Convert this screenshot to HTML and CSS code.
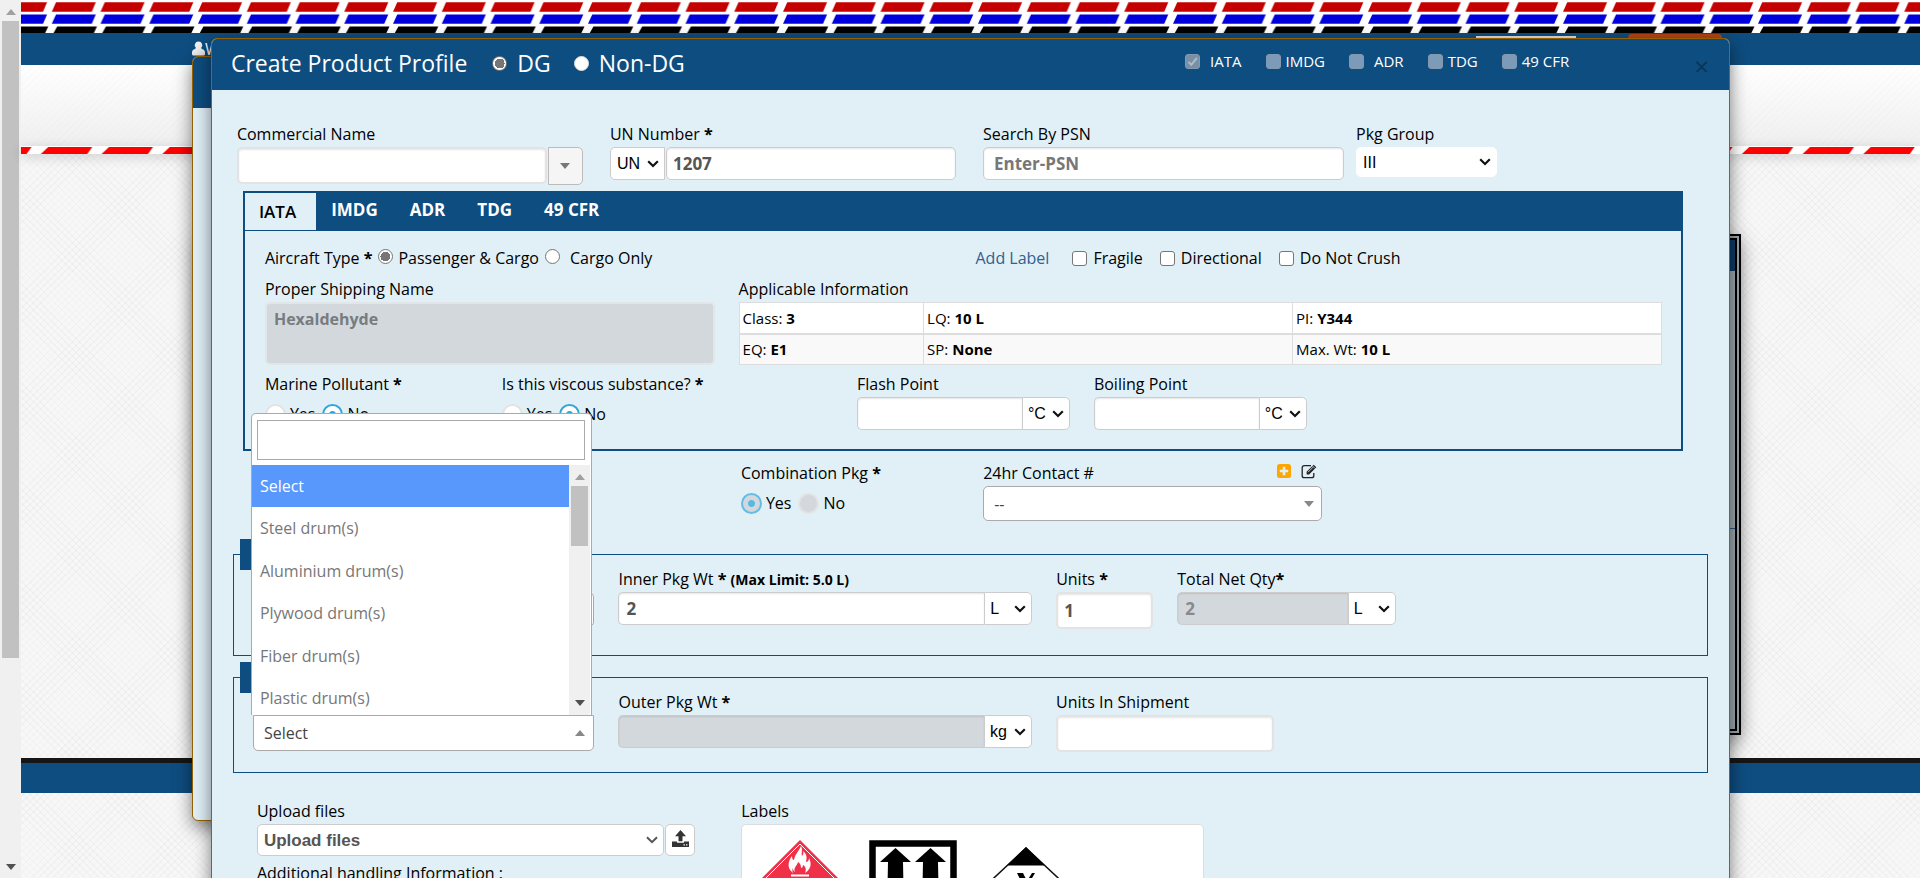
FILE: index.html
```html
<!DOCTYPE html>
<html lang="en">
<head>
<meta charset="utf-8">
<title>Create Product Profile</title>
<link rel="stylesheet" href="styles.css">
</head>
<body>
<div class="rail" aria-hidden="true">
  <span class="tri up"></span>
  <span class="thumb"></span>
  <span class="tri down dark"></span>
</div>
<div class="page">
  <header>
    <svg class="stripes" aria-hidden="true">
      <defs>
        <pattern id="air" x="30.8" y="0" width="48.75" height="33" patternUnits="userSpaceOnUse">
          <path d="M4.2 2.2H44L40 11.8H0z" fill="#c40000"/>
          <path d="M4.2 14.4H44L40 23.8H0z" fill="#0000dc"/>
          <path d="M5.4 26.6H45.2L42 33.2H1.6z" fill="#000"/>
        </pattern>
      </defs>
      <rect width="100%" height="33" fill="url(#air)"/>
    </svg>
    <div class="navbar">
      <svg class="user" viewBox="0 0 13 14" aria-hidden="true"><path d="M6.5 0a3.8 3.8 0 0 1 2.6 6.6L10 7.500Q13 8 13 11v1.500Q13 14 11.500 14h-10Q0 14 0 12.500V11Q0 8 3 7.500l.9-.9A3.800 3.800 0 0 1 6.500 0z" fill="#f2f2f2"/></svg><span class="welcome">W</span>
      <span class="tab-white"></span><span class="tab-orange"></span>
    </div>
    <div class="banner"></div>
    <svg class="redline" aria-hidden="true">
      <defs>
        <pattern id="red" x="19.8" y="0" width="60.75" height="8" patternUnits="userSpaceOnUse">
          <path d="M7.500 1H51.500L46.500 8H0z" fill="#f00"/>
        </pattern>
      </defs>
      <rect width="100%" height="8" fill="url(#red)"/>
    </svg>
  </header>
  <main class="content"><div class="back-panel"><div class="back-bar"></div><div class="back-line"></div></div></main>
  <footer class="footer"></footer>
  <div class="rest"></div>

  <div class="modal modal-back"><div class="modal-head"></div></div>

  <form class="modal modal-main">
    <div class="modal-head">
      <h1 class="title">Create Product Profile</h1>
      <label class="kind"><input type="radio" class="radio" name="kind" checked>DG</label>
      <label class="kind"><input type="radio" class="radio solid" name="kind">Non-DG</label>
      <div class="regs">
        <label class="reg g10"><input type="checkbox" class="check dim" checked disabled>IATA</label>
        <label class="reg"><input type="checkbox" class="check dim" disabled>IMDG</label>
        <label class="reg g10"><input type="checkbox" class="check dim" disabled>ADR</label>
        <label class="reg"><input type="checkbox" class="check dim" disabled>TDG</label>
        <label class="reg"><input type="checkbox" class="check dim" disabled>49 CFR</label>
      </div>
      <button type="button" class="close" aria-label="Close">×</button>
    </div>

    <div class="modal-body">
      <div class="top-row">
        <div>
          <label class="lab" for="cname">Commercial Name</label>
          <div class="group combo"><input id="cname" class="inp soft" type="text"><button type="button" class="combo-btn" aria-label="Show names"><span class="tri down"></span></button></div>
        </div>
        <div>
          <label class="lab" for="unno">UN Number <b>*</b></label>
          <div class="group un"><select class="sel unsel" aria-label="Prefix"><option>UN</option></select><input id="unno" class="inp tight" type="text" value="1207"></div>
        </div>
        <div>
          <label class="lab" for="psn">Search By PSN</label>
          <div class="group"><input id="psn" class="inp" type="text" placeholder="Enter-PSN"></div>
        </div>
        <div>
          <label class="lab" for="pg">Pkg Group</label>
          <select id="pg" class="sel pgsel"><option>III</option></select>
        </div>
      </div>

      <section class="panel">
        <nav class="tabs">
          <a class="tab active" href="#iata">IATA</a>
          <a class="tab" href="#imdg">IMDG</a>
          <a class="tab" href="#adr">ADR</a>
          <a class="tab" href="#tdg">TDG</a>
          <a class="tab" href="#cfr">49 CFR</a>
        </nav>
        <div class="panel-body" id="iata">
          <div class="span6 line">
            <span>Aircraft Type <b>*</b></span>
            <label class="air"><input type="radio" class="radio" name="air" checked>Passenger &amp; Cargo</label>
            <label class="air last"><input type="radio" class="radio" name="air">Cargo Only</label>
          </div>
          <div class="span6 line marks">
            <a class="addlabel" href="#labels">Add Label</a>
            <label class="mark"><input type="checkbox" class="check">Fragile</label>
            <label class="mark"><input type="checkbox" class="check">Directional</label>
            <label class="mark"><input type="checkbox" class="check">Do Not Crush</label>
          </div>
          <div class="span4">
            <label class="lab" for="ship">Proper Shipping Name</label>
            <textarea id="ship" class="ship" disabled>Hexaldehyde</textarea>
          </div>
          <div class="span8">
            <div class="lab">Applicable Information</div>
            <table class="info">
              <colgroup><col class="c1"><col class="c2"><col class="c3"></colgroup>
              <tr><td>Class: <b>3</b></td><td>LQ: <b>10 L</b></td><td>PI: <b>Y344</b></td></tr>
              <tr><td>EQ: <b>E1</b></td><td>SP: <b>None</b></td><td>Max. Wt: <b>10 L</b></td></tr>
            </table>
          </div>
          <div class="span2">
            <div class="lab">Marine Pollutant <b>*</b></div>
            <div class="yn"><label><input type="radio" class="ring" name="mp">Yes</label><label><input type="radio" class="ring" name="mp" checked>No</label></div>
          </div>
          <div class="span2">
            <div class="lab">Is this viscous substance? <b>*</b></div>
            <div class="yn"><label><input type="radio" class="ring" name="vs">Yes</label><label><input type="radio" class="ring" name="vs" checked>No</label></div>
          </div>
          <div class="span2 flash">
            <label class="lab" for="fp">Flash Point</label>
            <div class="group"><input id="fp" class="inp joined" type="text"><select class="sel unit" aria-label="Flash unit"><option>°C</option></select></div>
          </div>
          <div class="span2">
            <label class="lab" for="bp">Boiling Point</label>
            <div class="group"><input id="bp" class="inp joined" type="text"><select class="sel unit" aria-label="Boiling unit"><option>°C</option></select></div>
          </div>
        </div>
      </section>

      <div class="mid-row">
        <div class="comb">
          <div class="lab">Combination Pkg <b>*</b></div>
          <div class="yn"><label><input type="radio" class="ring off" name="cp" checked disabled>Yes</label><label><input type="radio" class="ring off" name="cp" disabled>No</label></div>
        </div>
        <div class="contact">
          <div class="lab contact-head"><label for="ct">24hr Contact #</label>
            <span class="tools">
              <button type="button" class="tool" aria-label="Add"><svg width="14" height="14" viewBox="0 0 14 14"><rect width="14" height="14" rx="2.500" fill="#ffa500"/><path d="M5.700 2.800h2.600v2.900h2.900v2.600H8.300v2.900H5.700V8.300H2.800V5.700h2.900z" fill="#e1f0f7"/></svg></button>
              <button type="button" class="tool" aria-label="Edit"><svg width="16" height="15" viewBox="0 0 16 15"><path d="M10 1.700H3.200a2 2 0 0 0-2 2v8a2 2 0 0 0 2 2h7.600a2 2 0 0 0 2-2V9" fill="none" stroke="#222" stroke-width="1.300"/><path d="M5.600 7.800 12.700.8l2.600 2.500-7.200 7.100H5.600z" fill="#222"/><path d="M7 8.200 12 3.200" stroke="#e1f0f7" stroke-width=".8"/><path d="m11.600 2 2.500 2.500" stroke="#e1f0f7" stroke-width=".7"/></svg></button>
            </span>
          </div>
          <select id="ct" class="sel big"><option>--</option></select>
        </div>
      </div>

      <section class="box">
        <div class="box-tag"></div>
        <div class="inner-grid">
          <div><label class="lab" for="ip">&nbsp;</label><select id="ip" class="sel big"><option></option></select></div>
          <div>
            <label class="lab" for="iw">Inner Pkg Wt <b>*</b> <b class="small">(Max Limit: 5.0 L)</b></label>
            <div class="group"><input id="iw" class="inp joined pad8" type="text" value="2"><select class="sel unit" aria-label="Inner unit"><option>L</option></select></div>
          </div>
          <div><label class="lab" for="iu">Units <b>*</b></label><input id="iu" class="inp soft tight" type="text" value="1"></div>
          <div>
            <label class="lab" for="tq">Total Net Qty<b>*</b></label>
            <div class="group"><input id="tq" class="inp joined pad8" type="text" value="2" disabled><select class="sel unit" aria-label="Total unit"><option>L</option></select></div>
          </div>
        </div>
      </section>

      <section class="box outer">
        <div class="box-tag"></div>
        <div class="outer-grid">
          <div>
            <div class="lab">&nbsp;</div>
            <div class="picker">
              <button type="button" class="picked">Select<span class="tri up"></span></button>
              <div class="drop">
                <input class="search" type="text" aria-label="Search packages">
                <div class="list">
                  <ul class="opts">
                    <li class="opt on">Select</li>
                    <li class="opt">Steel drum(s)</li>
                    <li class="opt">Aluminium drum(s)</li>
                    <li class="opt">Plywood drum(s)</li>
                    <li class="opt">Fiber drum(s)</li>
                    <li class="opt">Plastic drum(s)</li>
                  </ul>
                  <div class="track"><span class="tri up"></span><span class="grip"></span><span class="tri down dark"></span></div>
                </div>
              </div>
            </div>
          </div>
          <div>
            <label class="lab" for="ow">Outer Pkg Wt <b>*</b></label>
            <div class="group"><input id="ow" class="inp joined" type="text" disabled><select class="sel unit" aria-label="Outer unit"><option>kg</option></select></div>
          </div>
          <div><label class="lab" for="us">Units In Shipment</label><input id="us" class="inp soft" type="text"></div>
        </div>
      </section>

      <div class="bottom-row">
        <div class="uploads">
          <label class="lab" for="upl">Upload files</label>
          <div class="group upload-group"><select id="upl" class="sel upsel"><option>Upload files</option></select><button type="button" class="upbtn" aria-label="Upload"><svg width="17" height="17" viewBox="0 0 17 17"><path d="M8.500 0 14 6.200h-3.500v5h-4v-5H3z" fill="#333"/><path d="M0 11.500h5v1.200h7v-1.200h5V17H0z" fill="#333"/><path d="M11.500 14.800h1.400M14 14.800h1.400" stroke="#fff" stroke-width="1.200"/></svg></button></div>
          <label class="lab add" for="ah">Additional handling Information :</label>
          <textarea id="ah" class="note"></textarea>
        </div>
        <div class="labels" id="labels">
          <div class="lab">Labels</div>
          <div class="label-box">
            <svg width="92" height="92" viewBox="0 0 92 92"><path d="M46 0 92 46 46 92 0 46z" fill="#ee3148"/><path d="M46 4 88 46 46 88 4 46z" fill="none" stroke="#fff" stroke-width="1"/><path d="M38 32C33 28 34 21 38 16c0 3 1 4 2 4 1-6 5-9 7-14 2 4 0 7 1 10 1-1 2-3 1-5 4 3 4 7 3 11 2 0 3-2 3-4 3 6 2 11-4 15 2-4 0-7-2-8 0 2-1 3-2 3 0-3-1-5-3-6-1 4-5 6-3 10-2-1-2-3-2-4-1 2-1 4 1 7z" fill="#fff"/><path d="M37 35.500h18" stroke="#fff" stroke-width="2"/></svg>
            <svg width="88" height="92" viewBox="0 0 88 92"><rect x="3.500" y="3.500" width="81" height="100" fill="#fff" stroke="#000" stroke-width="6.500"/><path d="M26.500 8 42 22h-8l1 50H18l1-50h-8zM61.500 8 77 22h-8l1 50H53l1-50h-8z"/></svg>
            <svg class="lq" width="92" height="84" viewBox="0 0 92 84"><path d="M46 1 91 43 46 85 1 43z" fill="#fff" stroke="#111" stroke-width="1.500"/><path d="M46 0 65 18.500H27z"/><path d="M37 26h6l4 8 5-8h3l-7 12v12h-5V38z"/></svg>
          </div>
        </div>
      </div>
    </div>
  </form>
</div>
</body>
</html>
```
FILE: styles.css
```css
* { box-sizing: border-box; }
html, body { height: 100%; }
body {
  margin: 0;
  display: flex;
  overflow: hidden;
  font: 16px/25px "Open Sans", "Noto Sans", sans-serif;
  color: #000;
}
input, select, button, textarea { margin: 0; font: inherit; }
a { text-decoration: none; }

/* scroll tracks */
.rail {
  width: 21px;
  flex: none;
  display: flex;
  flex-direction: column;
  align-items: center;
  padding: 9px 0 8px;
  background: #f0f0f0;
}
.thumb { width: 17px; flex: 0 0 74%; margin-top: 6px; background: #c1c1c1; }
.rail .dark { margin-top: auto; }
.tri { width: 0; height: 0; border: 5px solid transparent; flex: none; }
.tri.up { border-top: 0; border-bottom-color: #a0a0a0; border-bottom-width: 6px; }
.tri.down { border-bottom: 0; border-top-color: #777; border-top-width: 6px; }
.tri.dark { border-top-color: #505050; }

/* page behind the dialogs */
.page {
  position: relative;
  flex: 1;
  min-width: 0;
  display: flex;
  flex-direction: column;
  background-color: #f7f7f7;
  background-image:
    repeating-linear-gradient(45deg, rgba(0,0,0,.025) 0 1px, transparent 1px 5px),
    repeating-linear-gradient(-45deg, rgba(0,0,0,.025) 0 1px, transparent 1px 5px);
}
.stripes { display: block; width: 100%; height: 33px; background: #fff; }
.navbar { height: 32px; padding: 8px 0 0 171px; background: #0e4d80; color: #fff; display: flex; }
.user { width: 13px; height: 15px; flex: none; }
.welcome { font-size: 16px; line-height: 16px; }
.tab-white, .tab-orange { position: absolute; top: 36px; left: 76.600%; width: 100px; height: 20px; background: #e8e0d8; }
.tab-orange { top: 34px; left: 84.600%; width: 94px; border-radius: 4px; background: #b84317; }
.banner {
  height: 81px;
  background:
    repeating-linear-gradient(-45deg, rgba(0,0,0,.012) 0 1px, transparent 1px 5px),
    linear-gradient(#fff, #efefef);
}
.redline { display: block; width: 100%; height: 8px; background: #fff; box-shadow: 0 3px 12px rgba(0,0,0,.18); }
.content { flex: 1; padding: 80px 179px 23px; display: flex; }
.back-panel {
  flex: 1;
  border: 6px double #000;
  background: #9ba7ae;
  box-shadow: 0 6px 18px rgba(0,0,0,.4);
}
.back-bar { height: 31px; background: #0b3c64; }
.back-line { height: 258px; border-bottom: 1px solid #2a5a80; }
.footer { height: 35px; border-top: 5px solid #161616; background: #0e4d80; }
.rest { height: 85px; }

/* dialogs */
.modal {
  position: absolute;
  width: 80%;
  border: 1px solid #966000;
  border-radius: 6px;
  background: #e1f0f7;
  box-shadow: 0 6px 18px rgba(0,0,0,.5);
}
.modal-back { top: 56px; left: 9%; bottom: 57px; }
.modal-main { top: 38px; left: 10%; min-height: 900px; }
.modal-head {
  display: flex;
  align-items: center;
  height: 51px;
  padding: 0 20px 2px 19px;
  border-radius: 5px 5px 0 0;
  background: #0e4d80;
  color: #fff;
}
.title { margin: 0 25px 0 0; font-size: 23px; font-weight: 400; }
.kind { display: flex; align-items: center; gap: 10px; margin-right: 23px; font-size: 23px; }
.regs { display: flex; gap: 24px; margin: -4px 0 0 auto; font-size: 15px; }
.reg { display: flex; align-items: center; gap: 5px; }
.reg.g10 { gap: 10px; }
.close { margin: 4px 0 0 125px; padding: 0; border: 0; background: none; color: #0a3457; font-size: 26px; line-height: 20px; }
.modal-body { padding-top: 32px; }

/* controls */
.lab { display: block; line-height: 25px; white-space: nowrap; }
.small { font-size: 14px; }
.group { display: flex; }
.inp {
  width: 100%;
  min-width: 0;
  height: 33px;
  padding: 0 10px;
  border: 1px solid #ccc;
  border-radius: 5px;
  background: #fff;
  box-shadow: inset 0 1px 2px rgba(0,0,0,.1);
  color: #555;
  font-size: 17px;
  font-weight: 700;
}
.inp::placeholder { color: #777; opacity: 1; }
.inp.tight { padding: 0 6px; }
.inp.pad8 { padding: 0 7px; }
.inp.soft { height: 37px; border: 2px solid #e3e3e3; }
.inp.joined { flex: 1; width: auto; border-right: 0; border-radius: 5px 0 0 5px; }
.inp:disabled { background: #d3d8dc; color: #858a8e; }
.sel {
  appearance: none;
  height: 33px;
  padding: 0 4px 0 6px;
  border: 1px solid #ccc;
  border-radius: 5px;
  background: #fff url("data:image/svg+xml,%3Csvg xmlns='http://www.w3.org/2000/svg' width='12' height='8'%3E%3Cpath d='M1.200 1.200 6 6l4.800-4.800' fill='none' stroke='%23111' stroke-width='2.200'/%3E%3C/svg%3E") no-repeat right 5px center;
  color: #000;
  font: 16px "Liberation Sans", Arial, sans-serif;
}
.sel.unit { flex: 0 0 48px; border-radius: 0 5px 5px 0; padding-left: 5px; }
.unsel { flex: 0 0 55px; border-radius: 5px 0 0 5px; }
.pgsel { width: 141px; height: 30px; border-color: #fff; }
.sel.big {
  width: 100%;
  height: 35px;
  padding-left: 10px;
  border-color: #aaa;
  background-image: url("data:image/svg+xml,%3Csvg xmlns='http://www.w3.org/2000/svg' width='10' height='6'%3E%3Cpath d='M0 0h10L5 6z' fill='%23888'/%3E%3C/svg%3E");
  background-position: right 7px center;
  font: 16px "Open Sans", "Noto Sans", sans-serif;
  color: #444;
}
.radio, .check, .ring { appearance: none; flex: none; background: #fff; }
.radio { width: 15px; height: 15px; border: 1px solid #767676; border-radius: 50%; }
.radio:checked { background: radial-gradient(circle, #767676 0 5px, #fff 5px); }
.radio.solid { border-color: #ddd; }
.check { width: 15px; height: 15px; border: 1px solid #767676; border-radius: 3px; }
.check.dim { border-color: #8299ae; background-color: #7c9bb8; }
.check.dim:checked { background: #788fa5 url("data:image/svg+xml,%3Csvg xmlns='http://www.w3.org/2000/svg' width='13' height='13'%3E%3Cpath d='M2.500 7 5.300 9.800 10.800 3' fill='none' stroke='%23a9bccb' stroke-width='2'/%3E%3C/svg%3E"); }
.ring { width: 21px; height: 21px; border: 2px solid #e3e3e3; border-radius: 50%; }
.ring:checked { border-color: #34a5da; background: radial-gradient(circle, #34a5da 0 3px, #fff 4px); }
.ring.off { background: #d3d8dc; }
.ring.off:checked { border-color: #66bbe3; background: radial-gradient(circle, #5bb8e4 0 3px, #d3d8dc 4px); }
.yn { display: flex; gap: 7px; padding-top: 5px; }
.yn label { display: flex; align-items: center; gap: 4px; height: 25px; }

/* first row */
.top-row { display: grid; grid-template-columns: repeat(4, 1fr); column-gap: 12px; padding: 0 12px 0 25px; }
.combo { margin-right: 15px; gap: 1px; }
.combo-btn {
  flex: 0 0 35px;
  height: 38px;
  padding: 0;
  display: flex;
  align-items: center;
  justify-content: center;
  border: 1px solid #bbb;
  border-radius: 0 5px 5px 0;
  background: #f5f5f5;
}
.un { margin-right: 15px; gap: 1px; }

/* tabbed panel */
.panel { margin: 6px 46px 0 31px; border: 2px solid #0e4d80; }
.tabs { display: flex; height: 38px; border-bottom: 1px solid #0e4d80; background: #0e4d80; }
.tab { padding: 4px 17px 0 15px; color: #fff; font-size: 17px; font-weight: 700; }
.tab.active { padding: 6px 20px 0 14px; background: #e1f0f7; color: #000; font-weight: 600; }
.panel-body {
  display: grid;
  grid-template-columns: repeat(12, 1fr);
  gap: 6px 24px;
  padding: 15px 19px 19px 20px;
}
.span2 { grid-column: span 2; min-width: 0; }
.span4 { grid-column: span 4; }
.span6 { grid-column: span 6; }
.span8 { grid-column: span 8; padding-bottom: 1px; }
.flash { grid-column: 6 / span 2; }
.line { display: flex; align-items: center; height: 25px; white-space: nowrap; }
.air { display: flex; align-items: center; gap: 5px; margin-left: 6px; }
.air .radio { margin-bottom: 4px; }
.air.last { gap: 10px; }
.marks { gap: 17px; }
.addlabel { margin: 0 6px 0 0; color: #31618f; }
.mark { display: flex; align-items: center; gap: 6px; }
.ship {
  display: block;
  width: 100%;
  height: 63px;
  padding: 3px 7px;
  border: 2px solid #e3e6e8;
  border-radius: 5px;
  background: #d3d8dc;
  color: #777c80;
  font-weight: 700;
  resize: none;
}
.info { width: 100%; border-collapse: collapse; table-layout: fixed; background: #fff; font-size: 15px; }
.info td { height: 31px; padding: 1px 3px; border: 1px solid #ddd; line-height: 24px; }
.info tr + tr td { border-top: 2px solid #ddd; background: #f9f9f9; }
.c1 { width: 20%; }
.c2 { width: 40%; }

/* contact row */
.mid-row { display: grid; grid-template-columns: 218fr 338fr 362fr; column-gap: 24px; margin-top: 10px; padding: 0 21px 0 529px; }
.contact-head { display: flex; }
.tools { display: flex; gap: 10px; align-items: center; margin: -5px 5px 0 auto; }
.tool { display: flex; padding: 0; border: 0; background: none; }

/* packaging boxes */
.box { position: relative; margin: 33px 21px 0 21px; padding: 12px 20px 26px 19px; border: 1px solid #0e4d80; }
.box.outer { margin-top: 21px; padding: 12px 20px 20px 19px; }
.box-tag { position: absolute; top: -16px; left: 6px; width: 120px; height: 31px; background: #0e4d80; }
.inner-grid, .outer-grid { display: grid; column-gap: 24px; }
.inner-grid { grid-template-columns: 341fr 413fr 97fr 218fr 267fr; }
.outer-grid { grid-template-columns: 341fr 413fr 218fr 388fr; }
.inner-grid > div, .outer-grid > div { min-width: 0; }
.picker { position: relative; }
.picked {
  display: flex;
  align-items: center;
  justify-content: space-between;
  width: 100%;
  height: 36px;
  padding: 0 8px 0 10px;
  border: 1px solid #aaa;
  border-radius: 0 0 5px 5px;
  background: #fff;
  color: #444;
}
.picked .tri { border-bottom-color: #888; }
.drop {
  position: absolute;
  z-index: 2;
  bottom: 100%;
  left: -2px;
  width: 100%;
  border: 1px solid #aaa;
  border-bottom: 0;
  border-radius: 5px 5px 0 0;
  background: #fff;
}
.search { display: block; width: calc(100% - 11px); height: 40px; margin: 6px 5px 5px; border: 1px solid #aaa; }
.list { display: flex; align-items: flex-start; height: 250px; overflow: hidden; }
.opts { flex: 1; display: flex; flex-direction: column; justify-content: space-between; height: 254px; margin: 0; padding: 0; list-style: none; }
.opt { height: 42px; padding: 0 8px; line-height: 42px; color: #777; }
.opt.on { background: #5897fb; color: #fff; }
.track { align-self: stretch; width: 21px; margin-right: 1px; padding: 9px 0; display: flex; flex-direction: column; align-items: center; background: #f0f0f0; }
.grip { width: 17px; height: 60px; margin-top: 6px; background: #c1c1c1; }
.track .dark { margin-top: auto; }

/* uploads and labels */
.bottom-row { display: grid; grid-template-columns: 460fr 462fr 481fr; column-gap: 24px; margin-top: 26px; padding: 0 20px 20px 45px; }
.upload-group { gap: 1px; margin-right: 22px; }
.upsel {
  flex: 1;
  height: 32px;
  color: #555;
  font-size: 17px;
  font-weight: 700;
  background-image: url("data:image/svg+xml,%3Csvg xmlns='http://www.w3.org/2000/svg' width='12' height='8'%3E%3Cpath d='M1 1.200 6 6.200l5-5' fill='none' stroke='%23555' stroke-width='2'/%3E%3C/svg%3E");
}
.upbtn { flex: 0 0 30px; height: 32px; padding: 0 0 3px; display: flex; align-items: center; justify-content: center; border: 1px solid #ccc; border-radius: 5px; background: #fff; }
.lab.add { margin-top: 5px; }
.note { width: 100%; height: 60px; border: 1px solid #ccc; }
.label-box { display: flex; gap: 23px; min-height: 120px; padding: 15px 12px; border: 1px solid #ddd; border-radius: 5px; background: #fff; }
.lq { margin-top: 7px; }
```
